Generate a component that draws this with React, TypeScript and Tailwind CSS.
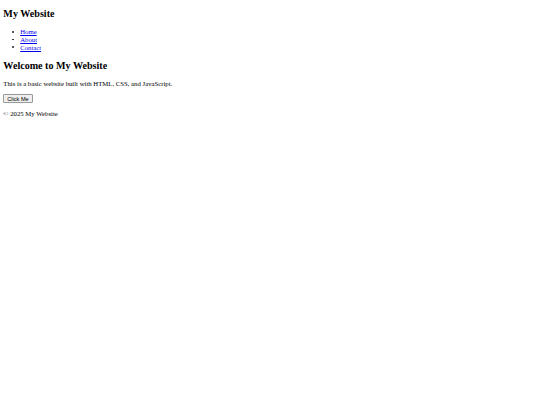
import React from "react";

const bullet =
  "relative before:content-[''] before:absolute before:left-[-7.8px] before:top-[2.6px] before:w-[1.7px] before:h-[1.7px] before:rounded-full before:bg-[#222]";

export default function App() {
  return (
    <div className="min-h-[405px] bg-white px-[3.37px] pt-[8.39px] text-black font-['Liberation_Serif','Times_New_Roman',serif] text-[6.74px] leading-[7.75px]">
      <header>
        <h1 className="text-[10.1px] leading-[11.6px] font-bold">My Website</h1>
        <nav>
          <ul className="list-none pl-[16.84px] mt-[8.39px]">
            <li className={bullet}><a href="#" className="text-[#0000ee] underline">Home</a></li>
            <li className={bullet}><a href="#" className="text-[#0000ee] underline">About</a></li>
            <li className={bullet}><a href="#" className="text-[#0000ee] underline">Contact</a></li>
          </ul>
        </nav>
      </header>
      <main>
        <h1 className="mt-[8.39px] text-[10.1px] leading-[11.6px] font-bold">Welcome to My Website</h1>
        <p className="mt-[8.39px]">This is a basic website built with HTML, CSS, and JavaScript.</p>
        <button className="mt-[6.74px] inline-flex items-center h-[8.9px] px-[2.9px] bg-[#efefef] border-[0.84px] border-[#9a9a9a] rounded-[1px] font-['Liberation_Sans',Arial,sans-serif] text-[5.6px] leading-[6.4px] text-black align-top">
          Click Me
        </button>
      </main>
      <footer>
        <p className="mt-[6.74px]">© 2025 My Website</p>
      </footer>
    </div>
  );
}
